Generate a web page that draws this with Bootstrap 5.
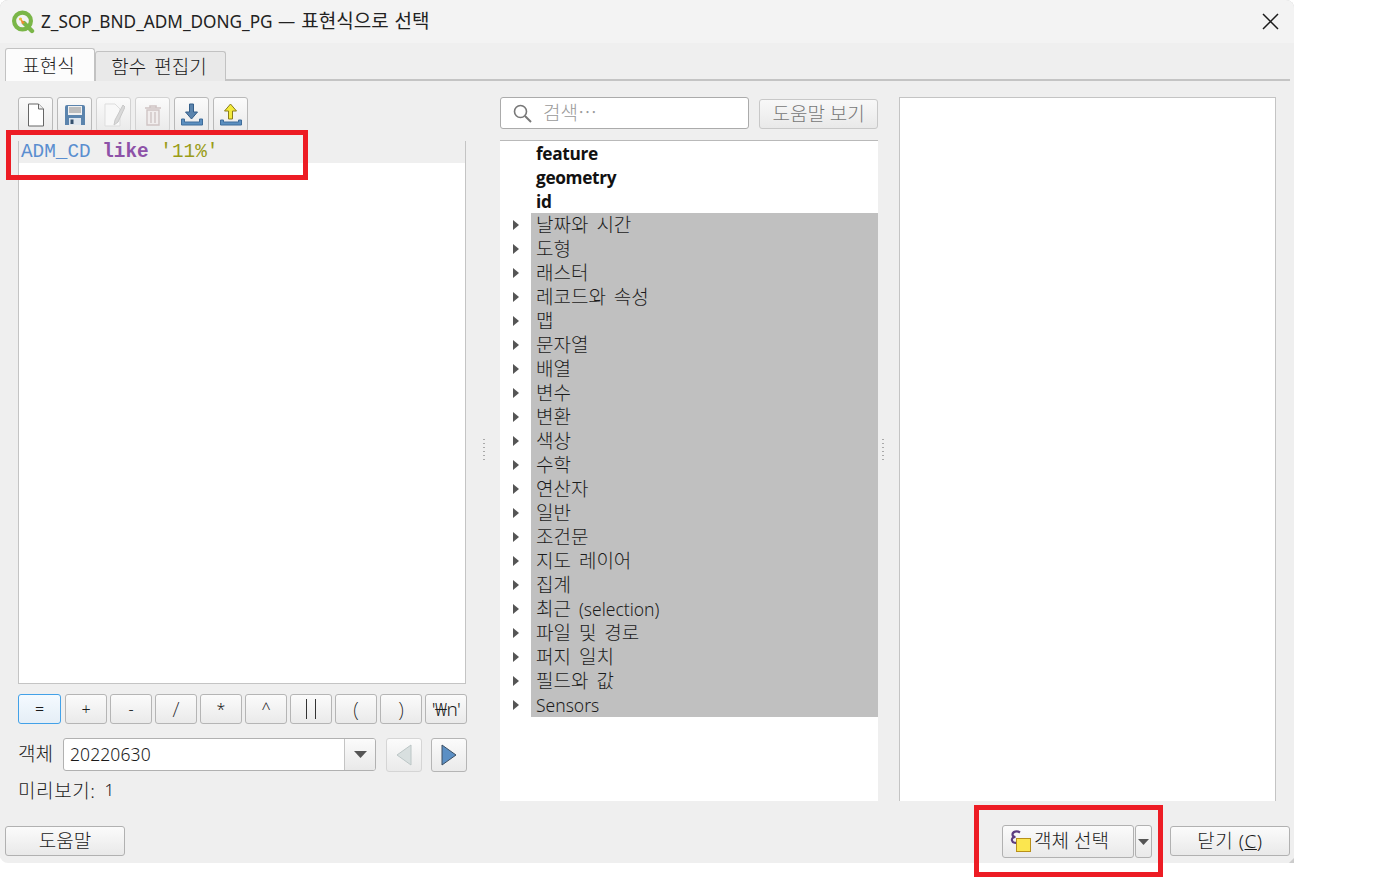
<!DOCTYPE html>
<html lang="ko">
<head>
<meta charset="utf-8">
<title>표현식으로 선택</title>
<link href="https://cdn.jsdelivr.net/npm/bootstrap@5.3.0/dist/css/bootstrap.min.css" rel="stylesheet">
<style>
html,body{background:#fff;margin:0;height:889px;overflow:hidden}
body{font-family:"Noto Sans","Noto Sans CJK KR",sans-serif;font-size:19px;font-weight:300;color:#1a1a1a;line-height:1;word-spacing:3px}
.ltn{font-size:17.5px}
.qwin{position:relative;width:1294px;height:863px;background:#efefef;border-radius:8px 8px 0 8px;overflow:hidden;box-shadow:inset 0 1px 0 #ccc}
.qtitle{height:43px;background:#f3f3f3;padding-left:11px;padding-right:15px;font-size:19px;font-weight:400;color:#222;word-spacing:1px}
.qtitle .ttxt{margin-left:6px;white-space:nowrap}
.qtitle .ltit{font-size:17.2px}
.qtabs{height:33px;margin:5px 4px 0 5px;border-bottom:2px solid #c4c4c4}
.qtab{height:30px;border:1px solid #c2c2c2;border-radius:3px 3px 0 0;background:#e9e9e9;padding:6px 3px 0 0;text-align:center;margin-top:3px;border-bottom:0;width:131px}
.qtab.on{background:#fcfcfc;width:90px;height:33px;margin-top:0;padding-top:8px}
.qmain{height:704px;margin:16px 18px 0 18px}
.qleft{width:449px}
.qtool{height:44px;gap:4px;align-items:flex-start}
.tbtn{width:35px;height:35px;border:1px solid #b9b9b9;border-radius:3px;background:linear-gradient(#fbfbfb,#eaeaea);padding:0}
.tbtn svg{display:block;margin:auto}
.tbtn.off{border-color:#d2d2d2}
.qedit{height:543px;margin-right:1px;background:#fff;border-left:1px solid #c4c4c4;border-right:1px solid #c4c4c4;border-bottom:1px solid #c4c4c4}
.qline{height:22px;background:#efefef;font-family:"Liberation Mono",monospace;font-size:19.35px;font-weight:400;line-height:22px;padding-left:2px;white-space:pre;word-spacing:0}
.kfield{color:#5a8ed0}.kword{color:#8e52a8;font-weight:700}.kstr{color:#9a9c18}
.qops{height:30px;margin-top:10px;gap:3px}
.opb{width:42px;height:30px;border:1px solid #b5b5b5;border-radius:3px;background:linear-gradient(#fbfbfb,#eaeaea);text-align:center;padding:0;font-size:16px;color:#1a1a1a;font-weight:300;word-spacing:0}
.opb.act{width:43px;margin-right:1px;border-color:#42a1e8;background:linear-gradient(#f4faff,#e5eef6)}
.opb.tall{font-size:21px;font-weight:200}
.qbars{display:block;width:10px;height:20px;margin:auto;border-left:1px solid #333;border-right:1px solid #333}
.opb.wn{font-size:19px;letter-spacing:-.6px;white-space:nowrap;overflow:hidden}
.qobj{height:34px;margin-top:14px}
.qlab{width:36px;flex:none;padding-top:7px;white-space:nowrap}
.qcombo{width:313px;height:33px;margin-left:9px;border:1px solid #b1b1b1;border-radius:3px;background:#fff;overflow:hidden}
.qcombo .val{flex:1;padding-left:6px;font-size:17.500px;letter-spacing:.1px;font-family:"Noto Sans",sans-serif}
.qcombo .drp{width:31px;height:100%;border-left:1px solid #c4c4c4;background:linear-gradient(#fbfbfb,#e9e9e9)}
.navb{width:36px;height:34px;border:1px solid #b5b5b5;border-radius:3px;background:linear-gradient(#fbfbfb,#eaeaea);padding:0}
.navb.off{border-color:#d5d5d5;margin-left:10px}.navb.go{margin-left:9px}
.qprev{margin-top:10px;height:22px;white-space:nowrap;word-spacing:0;letter-spacing:.6px}
.qpv{font-size:17px;margin-left:9px;position:relative;top:-2px}
.qsplit{width:33px}
.qdots{width:2px;height:24px;margin-top:4px;background:repeating-linear-gradient(#a9a9a9 0 1px,transparent 1px 4px)}
.qmid{width:378px}
.qsearch{height:44px;align-items:flex-start}
.qinput{width:250px;height:32px;border:1px solid #ababab;border-radius:3px;background:#fff;color:#9a9a9a;padding:1px 0 0 12px;gap:11px}
.qhelp{width:119px;height:30px;margin-left:10px;margin-top:2px;border:1px solid #c8c8c8;border-radius:3px;background:linear-gradient(#f8f8f8,#e9e9e9);color:#777;font-weight:300;padding:0}
.qtree{height:661px;margin-top:-1px;background:#fff;border-top:1px solid #b9b9b9;padding-left:31px;list-style:none;margin-bottom:0}
.qtree li{position:relative;height:24px;line-height:25px;padding-left:5px;white-space:nowrap}
.qtree li.b{font-weight:700;font-size:17.300px;font-family:"Open Sans","Noto Sans",sans-serif;letter-spacing:-.35px;color:#111}
.qtree li.g{background:#c0c0c0;color:#1c1c1c}
.qtree li.g::before{content:"";position:absolute;left:-18px;top:7px;border-left:6px solid #555;border-top:5.500px solid transparent;border-bottom:5.500px solid transparent}
.qgap2{width:21px;justify-content:flex-start;padding-left:4px}
.qright{width:377px;height:704px;background:#fff;border:1px solid #c4c4c4;border-width:1px 1px 0 1px}
.qfoot{margin-top:25px;padding:0 4px 0 5px;height:33px}
.fbtn{width:120px;height:30px;border:1px solid #b1b1b1;border-radius:3px;background:linear-gradient(#fbfbfb,#e9e9e9);font-weight:300;padding:0;color:#1a1a1a}
.fclose{letter-spacing:.5px}
.fsel{width:132px;height:33px;margin-top:-1px;gap:0;padding-left:7px;white-space:nowrap}
.fdrop{width:17px;height:33px;margin-top:-1px;margin-left:1px;margin-right:18px}
.redbox{position:absolute;border:5px solid #ed1c24;background:transparent;pointer-events:none}
.rb1{left:6px;top:130px;width:302px;height:50px}
.rb2{left:974px;top:805px;width:189px;height:72px}
.qgrip{position:absolute;right:0;bottom:0;border-left:5px solid transparent;border-bottom:5px solid #ccc}
</style>
</head>
<body>
<div class="qwin">
  <div class="qtitle d-flex align-items-center">
    <svg width="24" height="24" viewBox="0 0 24 24"><circle cx="11.500" cy="11" r="8.400" fill="none" stroke="#7ab648" stroke-width="4.200"/><path d="M13 13l8 8" stroke="#7ab648" stroke-width="4.400" stroke-linecap="round"/><path d="M9 8l5 5-3 1z" fill="#f08a30"/><circle cx="9.500" cy="9" r="1.600" fill="#e8c23a"/></svg>
    <span class="ttxt flex-grow-1"><span class="ltit">Z_SOP_BND_ADM_DONG_PG —</span> 표현식으로 선택</span>
    <svg width="17" height="17" viewBox="0 0 17 17"><path d="M1 1l15 15M16 1L1 16" stroke="#1a1a1a" stroke-width="1.500"/></svg>
  </div>
  <div class="qtabs d-flex align-items-start">
    <div class="qtab on">표현식</div>
    <div class="qtab">함수 편집기</div>
  </div>
  <div class="qmain d-flex">
    <div class="qleft">
      <div class="qtool d-flex">
        <button class="tbtn"><svg width="18" height="24" viewBox="0 0 18 24"><path d="M1.500 1h10l5 5v17h-15z" fill="#fff" stroke="#666"/><path d="M11.500 1v5h5" fill="#eee" stroke="#666"/></svg></button>
        <button class="tbtn"><svg width="22" height="22" viewBox="0 0 22 22"><path d="M1 3a2 2 0 0 1 2-2h16a2 2 0 0 1 2 2v18H1z" fill="#5b84ad"/><rect x="4" y="2" width="14" height="9" fill="#f1f1f1"/><path d="M5 4h12M5 6h12M5 8h12" stroke="#8a8a8a"/><rect x="5" y="14" width="12" height="7" fill="#dfe6ee"/><rect x="6.500" y="15.500" width="3" height="4.500" fill="#35506e"/></svg></button>
        <button class="tbtn off"><svg width="22" height="24" viewBox="0 0 22 24"><path d="M2 1h10l5 5v17H2z" fill="#f8f8f8" stroke="#ddd"/><path d="M20 2l-8 15-1 5 4-3 7-15z" fill="#d9d9d9" stroke="#c8c8c8"/></svg></button>
        <button class="tbtn off"><svg width="18" height="22" viewBox="0 0 18 22"><path d="M1 4h16M6 4V2h6v2" fill="none" stroke="#cfc4c4" stroke-width="1.600"/><path d="M3 6h12v15H3zM7 8v11M11 8v11" fill="#f1eded" stroke="#cfc4c4" stroke-width="1.400"/></svg></button>
        <button class="tbtn"><svg width="24" height="24" viewBox="0 0 24 24"><path d="M9.500 1h4v8h4l-6 7-6-7h4z" fill="#5b84ad" stroke="#355f8a"/><path d="M1.500 16v6h21v-6h-3v3h-15v-3z" fill="#5b8fc0" stroke="#3f6d9a"/></svg></button>
        <button class="tbtn"><svg width="24" height="24" viewBox="0 0 24 24"><path d="M9.500 16V8h-4l6-7 6 7h-4v8z" fill="#f3ea3c" stroke="#8a7d1a"/><path d="M1.500 17v5h21v-5h-3v2h-15v-2z" fill="#5b8fc0" stroke="#3f6d9a"/></svg></button>
      </div>
      <div class="qedit">
        <div class="qline"><span class="kfield">ADM_CD</span> <span class="kword">like</span> <span class="kstr">'11%'</span></div>
      </div>
      <div class="qops d-flex">
        <button class="opb act">=</button><button class="opb">+</button><button class="opb">-</button><button class="opb tall">/</button><button class="opb">*</button><button class="opb">^</button><button class="opb" aria-label="||"><span class="qbars"></span></button><button class="opb tall">(</button><button class="opb tall">)</button><button class="opb wn">'₩n'</button>
      </div>
      <div class="qobj d-flex align-items-start">
        <span class="qlab">객체</span>
        <div class="qcombo d-flex align-items-center">
          <span class="val">20220630</span>
          <span class="drp d-flex align-items-center justify-content-center"><svg width="13" height="7" viewBox="0 0 13 7"><path d="M0 0h13L6.500 7z" fill="#555"/></svg></span>
        </div>
        <button class="navb off"><svg width="16" height="22" viewBox="0 0 16 22"><path d="M15 1v20L1 11z" fill="#d8dfdf" stroke="#bcc6c6"/></svg></button>
        <button class="navb go"><svg width="16" height="22" viewBox="0 0 16 22"><path d="M1 1v20l14-10z" fill="#5b8fc4" stroke="#3c4f63"/></svg></button>
      </div>
      <div class="qprev">미리보기:<span class="qpv">1</span></div>
    </div>
    <div class="qsplit d-flex align-items-center justify-content-center"><span class="qdots"></span></div>
    <div class="qmid">
      <div class="qsearch d-flex">
        <div class="qinput d-flex align-items-center">
          <svg width="19" height="19" viewBox="0 0 19 19"><circle cx="7.500" cy="7.500" r="6" fill="none" stroke="#777" stroke-width="1.600"/><path d="M12 12l6 6" stroke="#777" stroke-width="2"/></svg>
          <span>검색⋯</span>
        </div>
        <button class="qhelp">도움말 보기</button>
      </div>
      <ul class="qtree">
        <li class="b">feature</li><li class="b">geometry</li><li class="b">id</li>
        <li class="g">날짜와 시간</li><li class="g">도형</li><li class="g">래스터</li><li class="g">레코드와 속성</li><li class="g">맵</li><li class="g">문자열</li><li class="g">배열</li><li class="g">변수</li><li class="g">변환</li><li class="g">색상</li><li class="g">수학</li><li class="g">연산자</li><li class="g">일반</li><li class="g">조건문</li><li class="g">지도 레이어</li><li class="g">집계</li><li class="g">최근 <span class="ltn">(selection)</span></li><li class="g">파일 및 경로</li><li class="g">퍼지 일치</li><li class="g">필드와 값</li><li class="g"><span class="ltn">Sensors</span></li>
      </ul>
    </div>
    <div class="qsplit qgap2 d-flex align-items-center"><span class="qdots"></span></div>
    <div class="qright"></div>
  </div>
  <div class="qfoot d-flex align-items-start">
    <button class="fbtn">도움말</button>
    <div class="flex-grow-1"></div>
    <button class="fbtn fsel d-flex align-items-center">
      <svg width="24" height="24" viewBox="0 0 24 24"><path d="M10 2.500C7 .5 2.500 1.500 2.500 4.500c0 1.500 1.500 2.500 3 2.500-2.500 0-4 1.500-3.500 3.500.5 2.500 4 3 7 1.500" fill="none" stroke="#5c3d80" stroke-width="2.200"/><rect x="6.500" y="8.500" width="14" height="13" fill="#fbe64f" stroke="#b8901a"/></svg>
      <span>객체 선택</span>
    </button>
    <button class="fbtn fdrop d-flex align-items-center justify-content-center"><svg width="11" height="6" viewBox="0 0 11 6"><path d="M0 0h11L5.500 6z" fill="#555"/></svg></button>
    <button class="fbtn fclose">닫기 (<u>C</u>)</button>
  </div>
  <div class="qgrip"></div>
</div>
<div class="redbox rb1"></div>
<div class="redbox rb2"></div>
<script src="https://cdn.jsdelivr.net/npm/bootstrap@5.3.0/dist/js/bootstrap.bundle.min.js"></script>
</body>
</html>
